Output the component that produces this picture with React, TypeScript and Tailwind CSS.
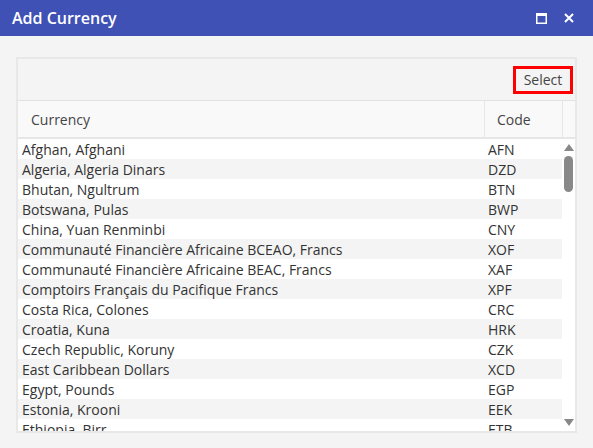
import React from "react";

const rows: [string, string][] = [
  ["Afghan, Afghani", "AFN"],
  ["Algeria, Algeria Dinars", "DZD"],
  ["Bhutan, Ngultrum", "BTN"],
  ["Botswana, Pulas", "BWP"],
  ["China, Yuan Renminbi", "CNY"],
  ["Communauté Financière Africaine BCEAO, Francs", "XOF"],
  ["Communauté Financière Africaine BEAC, Francs", "XAF"],
  ["Comptoirs Français du Pacifique Francs", "XPF"],
  ["Costa Rica, Colones", "CRC"],
  ["Croatia, Kuna", "HRK"],
  ["Czech Republic, Koruny", "CZK"],
  ["East Caribbean Dollars", "XCD"],
  ["Egypt, Pounds", "EGP"],
  ["Estonia, Krooni", "EEK"],
  ["Ethiopia, Birr", "ETB"],
];

export default function App() {
  return (
    <div
      className="w-[593px] h-[448px] bg-[#f4f4f4] flex flex-col overflow-hidden"
      style={{ fontFamily: '"Open Sans", "Liberation Sans", sans-serif' }}
    >
      <div className="h-[36px] bg-[#3f51b5] flex items-center pl-[12px] pr-[19px] shrink-0">
        <div className="text-white text-[16px] font-semibold flex-1 leading-none">Add Currency</div>
        <svg width="11" height="11" viewBox="0 0 11 11" className="mr-[17px]">
          <rect x="0.75" y="0.75" width="9.5" height="9.5" fill="none" stroke="white" strokeWidth="1.5" />
          <rect x="0" y="0" width="11" height="3" fill="white" />
        </svg>
        <svg width="10" height="10" viewBox="0 0 10 10">
          <path d="M1 1L9 9M9 1L1 9" stroke="white" strokeWidth="2" />
        </svg>
      </div>
      <div className="pt-[21px] px-[16px]">
        <div className="h-[376px] border-2 border-[#e8e8e8] flex flex-col overflow-hidden bg-white">
          <div className="h-[42px] bg-[#f4f4f4] border-b border-[#e2e2e2] flex items-center justify-end pr-[2px] shrink-0">
            <div className="h-[28px] w-[60px] border-[3px] border-[#ff0000] flex items-center justify-center text-[14px] text-[#444]">
              Select
            </div>
          </div>
          <div className="h-[38px] bg-[#f9f9f9] border-b-2 border-[#e6e6e6] flex shrink-0 text-[14px] text-[#444]">
            <div className="w-[467px] pl-[13px] flex items-center border-r border-[#e6e6e6]">Currency</div>
            <div className="w-[78px] pl-[12px] flex items-center border-r border-[#e6e6e6]">Code</div>
            <div className="flex-1"></div>
          </div>
          <div className="flex flex-1 overflow-hidden">
            <div className="w-[544px] overflow-hidden">
              {rows.map(([name, code], i) => (
                <div
                  key={code}
                  className={`h-[20px] flex items-center text-[14px] text-[#333] whitespace-nowrap ${
                    i % 2 === 1 ? "bg-[#f4f4f4]" : "bg-white"
                  }`}
                >
                  <div className="w-[466px] pl-[4px]">{name}</div>
                  <div className="pl-[4px]">{code}</div>
                </div>
              ))}
            </div>
            <div className="flex-1 bg-white flex flex-col items-center pt-[5px] pb-[5px]">
              <svg width="10" height="7" viewBox="0 0 10 7">
                <path d="M5 0L10 7H0Z" fill="#888" />
              </svg>
              <div className="w-[9px] h-[36px] rounded-full bg-[#888] mt-[5px]"></div>
              <div className="flex-1"></div>
              <svg width="10" height="7" viewBox="0 0 10 7">
                <path d="M0 0H10L5 7Z" fill="#888" />
              </svg>
            </div>
          </div>
        </div>
      </div>
    </div>
  );
}
